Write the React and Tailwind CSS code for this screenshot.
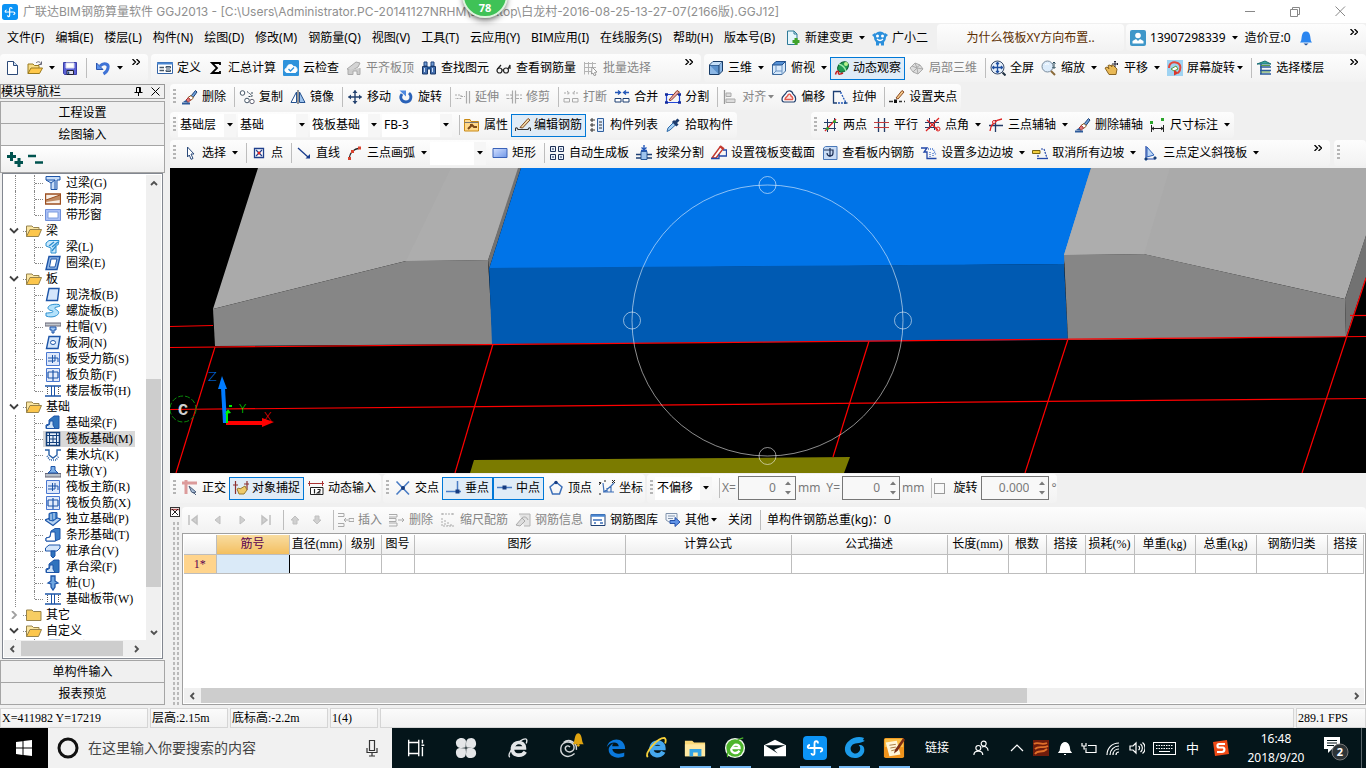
import { useState } from 'react'
import clsx from 'clsx'

const P = ({ d, c = '#1f4e8c', w = 1, f = 'none', dash }) => (
  <path d={d} stroke={c} strokeWidth={w} fill={f} strokeDasharray={dash} />
)

const broom = (
  <>
    <P d="M9 7L13.500 1.500L15 3L11 8.500Z" c="#1d3f73" f="#6fa3dd" />
    <P d="M6 8.500L9 6.500L11.500 9L8.500 11.500Z" c="#8a5a20" f="#fff" />
    <P d="M4 11L6.500 8.500L8.500 11L6 13.500Z" c="#a33" f="#d77" />
    <P d="M0 14.500H8" c="#2c5a9a" w="2" />
    <P d="M1 13L4 11L6 13.500Z" c="none" f="#2c5a9a" />
  </>
)

const icons = {
  newFile: <><P d="M3.500 1.500H9.500L13.500 5.500V14.500H3.500Z" c="#2d4a78" f="#fff" /><P d="M9.500 1.500V5.500H13.500" c="#2d4a78" f="#cfe0f5" /></>,
  open: <><P d="M1 13.500V4H6L7.500 5.500H12V8" c="#9a7a1e" f="#f7dd86" /><P d="M1 13.500L4 8H15.500L12.500 13.500Z" c="#9a7a1e" f="#ffc84a" /><P d="M9 3C11 1 13 1.500 14 4M14.500 1.500V4.500H11.500" c="#667" /></>,
  save: <><P d="M1.500 2.500H14.500V14.500H2.500L1.500 13.500Z" c="#3b3fa8" f="#5b62d6" /><P d="M4 3H12V8H4Z" c="#dde" f="#fff" /><P d="M5 10.500H11.500V14.500H5Z" c="#223" f="#dde" /><P d="M6.500 11.500V14" w="1.500" /></>,
  undo: <><P d="M5 6C9 2 14 4 13 8C12.500 11 11 12.500 8.500 14" c="#3f73d6" w="3" /><P d="M1.500 3V9.500H8Z" c="#2a55b0" f="#5b93ee" /></>,
  define: <><P d="M0.500 2.500H15.500V13.500H0.500Z" c="#3565a8" f="#fff" /><P d="M0 3.500H16" c="#4a86d0" w="2" /><P d="M2.500 7.500H7M2.500 10.500H7" c="#456" w="1.500" /><P d="M9 6.500H13.500V8H9ZM9 10H13.500V11.500H9Z" c="#456" f="#d8e6f7" /></>,
  sigma: <P d="M12 5V3H4L9 8L4 13H12V11" c="#000" w="1.800" />,
  cloud: <><rect width="16" height="16" rx="1" fill="#2f93dc" /><P d="M4 12.500C1 12 1.500 8 4 8C4 4 9 3.500 10.500 6.500C15 6 15 12.500 12 12.500Z" c="#fff" f="#fff" /><P d="M5.500 9L7.500 11L11 7.500" c="#2f93dc" w="1.400" /></>,
  slab: <><P d="M1 9L10 2L14 3L12 7L5 11Z" c="#a8a8a8" f="#d4d4d4" /><P d="M2 10V14.500H7V11H11V14.500H14V8" c="#aaa" f="#ccc" /></>,
  find: <><P d="M3 2H6V6H3ZM10 2H13V6H10Z" c="#23457f" f="#6f9ad2" /><P d="M1.500 6.500H6.500V14H1.500ZM9.500 6.500H14.500V14H9.500Z" c="#1a3868" f="#456fae" /><P d="M6 8H10" w="3" /><P d="M3.500 8V12M11.500 8V12" c="#cfe0f8" /></>,
  glasses: <><circle cx="3.500" cy="10.500" r="2.500" fill="none" stroke="#222" strokeWidth="1.200" /><circle cx="10" cy="10.500" r="2.500" fill="none" stroke="#222" strokeWidth="1.200" /><P d="M1.500 9L5 5M6 10H7.500M12 9L14 5V9" c="#222" w="1.200" /></>,
  batch: <><P d="M1.500 2V14.500M5.500 2V14.500M9.500 2V10M1 3.500H13M1 7.500H13M1 11.500H8" c="#b4b4b4" /><P d="M9 7L14 12L11.500 12.500L13 15L11 15.500L10 13L8.500 14Z" c="#999" f="#fff" /></>,
  cube: <><P d="M1.500 5L5 1.500H14.500V11L11 14.500H1.500Z" c="#173b66" f="#8db8e6" /><P d="M1.500 5H11V14.500M11 5L14.500 1.500" c="#173b66" f="#5b91cc" /><P d="M2 5L5 2H14L11 5Z" c="none" f="#c5dff8" /></>,
  topView: <><P d="M1.500 5L5 1.500H14.500V11L11 14.500H1.500Z" c="#3d6a9d" f="#d7e9fb" /><P d="M1.500 5L5 1.500H14.500L11 5Z" f="#5590d4" /><P d="M11 5V14.500M5 5V11H11M5 11L2 14" c="#6a93c2" /></>,
  orbit: <><ellipse cx="9" cy="7" rx="6" ry="4.500" transform="rotate(-40 9 7)" fill="#1f9a52" stroke="#0d5f30" /><P d="M5 4C8 5 11 8 12 11" c="#9be8a8" w="1.500" /><circle cx="12" cy="4" r="2" fill="#b8f28d" /><P d="M1.500 14.500C2.500 10 5 11 4.500 13C4 15 7 14 9 13" c="#c42020" w="1.500" /></>,
  partial: <><P d="M1 8L6 3L11 5L14 9L9 14L4 12Z" c="#aaa" f="#ddd" /><P d="M6 3L8 8L4 12M8 8L14 9M3 6L8 8L9 14M11 5L7 8" c="#aaa" /></>,
  full: <><circle cx="7.500" cy="7.500" r="6.500" fill="#e6f0fb" stroke="#3a4c69" /><P d="M7.500 2.500V12.500M2.500 7.500H12.500M6 4L7.500 2.500L9 4M6 11L7.500 12.500L9 11M4 6L2.500 7.500L4 9M11 6L12.500 7.500L11 9" c="#1f4fa0" w="1.300" /><P d="M12.500 12.500L15.500 15.500" c="#234" w="2" /></>,
  zoom: <><circle cx="6.500" cy="6.500" r="5.500" fill="#dcecfb" stroke="#7b8c9c" /><P d="M4 5C5 3.500 7 3.500 8 4.500" c="#fff" /><P d="M10 11L14 15" c="#8a6a3a" w="2" /><P d="M13 2V8M11.500 3.500L13 2L14.500 3.500M11.500 7L13 8.500L14.500 7" c="#245" /></>,
  pan: <><P d="M1 8L3 7L5 9L4 5.500L6 5L8 7L7.500 5L9.500 5.500L13 9L12 14.500H5Z" c="#8a6524" f="#e9b956" /><P d="M11 1V7M8 4H14M10 2L11 1L12 2M13 3L14 4L13 5" c="#223" /></>,
  screenRotate: <><rect width="16" height="16" fill="#9fd3f2" /><P d="M2 8C2 3 6 1.500 9 2.500C15 4 14 10 11 13" c="#e2483c" w="2" /><P d="M4 9L9 6L11 9L7 11Z" c="#5a9a3a" f="#fff" /><P d="M7 10L12 13L7 15.500Z" c="none" f="#d9372c" /></>,
  floor: <><P d="M1 4L9 1L15 4Z" c="#1b6d74" f="#38a89d" /><P d="M5 4V14M4 7H15M4 10.500H15M4 14H15" c="#2a5a9a" w="1.600" /><P d="M5 5.500H14M5 12H14" c="#5b9a46" /></>,
  broom,
  copy: <><circle cx="3.500" cy="4" r="2.300" fill="#fff" stroke="#456" /><circle cx="8" cy="11.500" r="2.300" fill="#fff" stroke="#456" /><circle cx="13" cy="12.500" r="2.200" fill="#fff" stroke="#667" /><P d="M8 2.500L13 6.500M13 3V7.500H9.500" c="#345" dash="2 1" /></>,
  mirror: <><P d="M6.500 3V13.500H1Z" c="#24518f" f="#fff" /><P d="M9.500 3V13.500H15Z" c="#24518f" f="#9ec3ec" /><P d="M8 1V15" c="#333" /></>,
  move: <><P d="M8 1.500V14.500M1.500 8H14.500" c="#24426f" w="1.400" /><P d="M5.500 4L8 1L10.500 4ZM5.500 12L8 15L10.500 12ZM4 5.500L1 8L4 10.500ZM12 5.500L15 8L12 10.500Z" c="none" f="#24426f" /></>,
  rotate: <><P d="M4 5C1 9 4 13 8 13C13 13 14.500 7 11 4" c="#2a62b8" w="2.800" /><P d="M1.500 1.500H8V7.500Z" c="none" f="#4f8ae0" /></>,
  extend: <><P d="M14.500 2V14.500M11.500 2V14.500" c="#aaa" w="1.200" /><P d="M0 6H6V9.500H0M6 7.500H10" c="#aaa" dash="2 1" /></>,
  trim: <><P d="M6.500 1.500V14.500M9.500 1.500V14.500" c="#aaa" w="1.200" /><P d="M0 6H6V9.500H0M10 6H16M10 9.500H16" c="#aaa" dash="3 1" /></>,
  split: <><P d="M1 9.500H6.500V13H1ZM9.500 9.500H15V13H9.500Z" c="#aaa" /><P d="M1 4H6M4 2L6.500 4L4 6M15 4H10M12 2L9.500 4L12 6" c="#aaa" dash="2 1" /></>,
  merge: <><P d="M1 9.500H7V13H1ZM9 9.500H15V13H9Z" c="#1d3f73" f="#fff" /><P d="M1 3.500H6M4 1.500L6.500 3.500L4 5.500M15 3.500H10M12 1.500L9.500 3.500L12 5.500" c="#2458b8" w="1.300" /></>,
  divide: <><P d="M1.500 5.500H14.500V13.500H1.500Z" c="#2247d8" w="1.200" /><P d="M0 5.500H3M13 5.500H16M0 13.500H3M13 13.500H16" c="#122a9c" w="2.500" /><P d="M4 11L12 1.500L14.500 3L6 11.500Z" c="#8a3b22" f="#eaa" /></>,
  align: <><P d="M2.500 1V15" c="#999" w="1.300" /><P d="M4 4H9V7.500H4ZM4 10H13V13.500H4Z" c="#aaa" f="#ddd" /></>,
  offset: <><P d="M1 10C1 7 4 6 5 4C6 1 11 1 12 5C15 7 15.500 12 13 13H3C1.500 13 1 12 1 10Z" c="#24426f" w="1.200" f="#fff" /><P d="M4 10.500C4 8 6.500 8 7 6C8 4.500 9.500 5 10 7C12 8 12 10 11.500 10.500Z" c="#e35b50" w="1.400" f="#fbe3e0" /></>,
  stretch: <><P d="M9 2.500H1.500V14H5" c="#1d3f73" w="1.300" /><P d="M9 3V6M10 6L14 14H6" c="#2458b8" dash="2 1" w="1.300" /><P d="M12 14H15.500" w="1.500" /></>,
  grip: <><P d="M0 12.500H4" c="#333" w="1.500" /><P d="M5 10.500H8V14H5Z" c="none" f="#111" /><P d="M10 12.500H16" c="#333" w="1.500" dash="3 2" /><P d="M7 9L13 1.500L15 3L9 10Z" c="#8a4a22" f="#f5c98a" /></>,
  props: <><P d="M0.500 2.500H6L7 4.500H14.500V14H0.500Z" c="#c98a17" f="#ffd98c" /><P d="M0.500 5.500H14.500" c="#777" /><P d="M4 12L8 8L10 10H13M8 8L6 8" c="#7d4a18" w="2" /></>,
  editBar: <><P d="M0.500 14C0 10 2 10 3 12.500H13C14 10 16 10 15.500 14" c="#333" w="1.200" /><P d="M5 10.500L13 1.500L15 3L7.500 11Z" c="#7f4a22" f="#f0d9a8" /></>,
  list: <><P d="M1 2H3V4H1ZM1 7H3V9H1ZM1 12H3V14H1Z" c="#333" /><P d="M7.500 1.500H13.500V14.500H7.500Z" c="#2f5f9f" f="#dbe9fa" /><P d="M9 5H12M9 8H12M9 11H12" c="#333" /><P d="M4 3H6M4 8H6M4 13H6" c="#333" dash="1 1" /></>,
  picker: <><P d="M2 14.500L3 11L9 5L11 7.500L5 13Z" c="#2e6aa8" f="#a9d2f5" /><P d="M8 4L12.500 8.500M10 6L13.500 2.500" c="#1b3b6d" w="3" /></>,
  twoPoint: <><P d="M4.500 2V15M11.500 1V14M1 5.500H15M0 11.500H13" c="#223a66" /><P d="M2 14L13 2" c="#d22" w="1.300" /><circle cx="11.500" cy="4.500" r="1.500" fill="#2aa52a" /><circle cx="4.500" cy="11.500" r="1.500" fill="#2aa52a" /></>,
  parallel: <><P d="M4.500 1V15M10.500 1V15" c="#223a66" w="1.300" /><P d="M0 5.500H15M0 10.500H15" c="#c43b3b" /></>,
  angle: <><P d="M4.500 1V12M9.500 3V13M0 5.500H14M0 10.500H9" c="#223a66" /><P d="M1 14L14 1M2 3L13 13" c="#d22" w="1.300" /><circle cx="13" cy="12" r="2" fill="none" stroke="#d22" /></>,
  arcAxis: <><P d="M7.500 3V15M1 8.500H15" c="#223a66" w="1.300" /><P d="M2 14C3 6 7 3 14 2" c="#d22" w="1.300" /><circle cx="6" cy="5" r="1.500" fill="#fff" stroke="#d22" /></>,
  dimension: <><P d="M1.500 8V15M13.500 8V15M2 11.500H14M4 10L2 11.500L4 13M11 10L13 11.500L11 13" c="#222" /><P d="M0 4H3V7H0ZM11 1H14V4H11Z" c="none" f="#2aa52a" /></>,
  cursor: <P d="M5.500 2L12 9H9L11 13.500L9 14.300L7.300 10L5.500 12Z" c="#2b4a7a" f="#fff" />,
  point: <><P d="M3.500 3.500H12.500V12.500H3.500Z" c="#1f3f8c" w="1.300" f="#fff" /><P d="M5 5L11 11M11 5L5 11" c="#1f3f8c" w="1.200" /><circle cx="8" cy="8" r="1.500" fill="#d22" /></>,
  line: <><P d="M2 3L12 12" c="#173b8c" w="1.300" /><P d="M9.500 13.500H14V9Z" c="none" f="#173b8c" /></>,
  arc: <><P d="M2 14C3 7 6 4 13 3" c="#222" w="1.300" /><P d="M1 12H4V15H1ZM4 5H7V8H4ZM11 1.500H14V4.500H11Z" c="none" f="#d9432f" /></>,
  rect: <><defs><linearGradient id="rectFill" x2="1" y2="1"><stop stopColor="#d4e1ff" /><stop offset="1" stopColor="#6f97e8" /></linearGradient></defs><P d="M1 3.500H15V12.500H1Z" c="#3a62b8" f="url(#rectFill)" /></>,
  autoSlab: <P d="M1.500 1.500H6.500V6.500H1.500ZM9.500 1.500H14.500V6.500H9.500ZM1.500 9.500H6.500V14.500H1.500ZM9.500 9.500H14.500V14.500H9.500ZM4 3V5M12 3V5M4 11V13M12 11V13" c="#1d3056" f="#eaf1fb" />,
  beamSplit: <><P d="M5 6.500H11V14.500H5Z" c="#2c5a9a" f="#9ec3ec" /><P d="M0 9.500H5M0 13H5M11 9.500H16M11 13H16" c="#1d3f73" w="1.300" /><P d="M8 0V4M5.500 2.500L8 4.500L10.500 2.500M5 5.500H11" c="#2458b8" w="1.400" /></>,
  section: <><P d="M1 13L9 2L12 4L5 13Z" c="#c4382f" f="#fff" w="1.400" /><P d="M0 13.500H8V9M12 5H15.500V11H8" c="#2247a8" w="1.300" /><P d="M9 1L13 4" c="#c4382f" w="2" /></>,
  viewBar: <><P d="M3.500 1.500H15V14.500H1.500V3Z" c="#4a78b8" f="#c9dcf5" /><P d="M2 5H11V8C11 12 5 12 5 8M8 3V12" c="#1d3056" w="1.200" /></>,
  slope: <><P d="M0 3H6L3 7H6V13.500H15.500" c="#2247a8" w="1.300" /><P d="M7 4H12L15 10M9 7V12M12 8V12" c="#4a78d0" dash="1 1" w="1.400" /></>,
  cancelSlope: <><P d="M0.500 5.500H8V8.500H0.500Z" c="#7a6510" f="#f2cf3f" /><P d="M9 4H12L15 13M6 10V13" c="#2247a8" dash="2 1" w="1.200" /><P d="M5 13.500H16" c="#2247a8" w="1.300" /></>,
  threeSlope: <><P d="M4 2V12L11 10Z" c="#2c62b8" f="#bcd6f7" /><P d="M3 1V14M3 14H12" c="#2247a8" w="1.200" /><P d="M2 13H4V15H2ZM11 12H13V14H11Z" f="#113" /></>,
  ortho: <><P d="M0 3H15M4 0V14" c="#dc9b9b" w="3" /><P d="M7 6L14 12L11.500 13L9.500 12Z" c="#4c5f7c" f="#a9bdd6" /><P d="M11 12L14 15" c="#4c5f7c" /></>,
  snap: <><P d="M2.500 1V14M0 5H5M14 1V10M11 4H16" c="#8c2f2f" w="1.200" /><P d="M4 9L6 8L7 9L12 6L14 10L11 14H6Z" c="#9a7a2e" f="#f0cb6a" /></>,
  dynInput: <><P d="M0 3.500H16M1.500 1V6M14.500 1V6" c="#a33" /><P d="M2.500 7.500H15V14.500H2.500Z" c="#222" f="#fff" /><P d="M6.500 9V13.500M9.500 9.500H12V11L9.500 13H12.500" c="#222" w="1.200" /></>,
  cross: <><P d="M1.500 1.500L14 14.500M14 1.500L1.500 14.500" c="#4a7cc4" w="1.600" /><circle cx="8" cy="8" r="2" fill="#153b80" /></>,
  perp: <><P d="M11.500 1V12M0 11.500H15" c="#4a7cc4" w="1.500" /><P d="M9.500 9.500H13.500V13.500H9.500Z" c="none" f="#153b80" /></>,
  mid: <><P d="M0 7.500H15" c="#4a7cc4" w="1.500" /><P d="M5.500 5.500H9.500V9.500H5.500Z" c="none" f="#153b80" /></>,
  vertex: <><P d="M8 2L14 7L11.500 14H4.500L2 7Z" c="#3c6fb8" w="1.500" /><circle cx="8" cy="2.500" r="1.700" fill="#153b80" /></>,
  coord: <><P d="M4 3L5 12M4 12H15M5 12L12 6L15 3M8 8V12M12 6V12" c="#3c6fb8" w="1.200" /><P d="M0 2L2 4M2 2L0 5M13 0L16 3M16 0L13 3M6 0V2M0 14H2" c="#222" /></>,
  first: <P d="M3 3V13M11 4V12L6 8Z" c="#c0c0c0" w="1.500" f="#d0d0d0" />,
  prev: <P d="M10 4V12L5 8Z" c="#c0c0c0" f="#d0d0d0" />,
  next: <P d="M6 4V12L11 8Z" c="#c0c0c0" f="#d0d0d0" />,
  last: <P d="M12 3V13M4 4V12L9 8Z" c="#c0c0c0" w="1.500" f="#d0d0d0" />,
  up: <P d="M8 4L12 8H10V12H6V8H4Z" c="#c0c0c0" f="#d0d0d0" />,
  down: <P d="M8 12L12 8H10V4H6V8H4Z" c="#c0c0c0" f="#d0d0d0" />,
  insertRow: <P d="M0 1.500H6V4.500H0M0 11.500H6V14.500H0M6 8H10M8 6L6 8L8 10M11 6.500H16V9.500H11Z" c="#aaa" />,
  removeRow: <P d="M0 2.500H8V5H0M0 11H8V14H0M0 6.500H7V9.500H0M9 8H15M13 6L15 8L13 10" c="#aaa" />,
  scaleBar: <P d="M2 2H13M2 1V3M13 1V3M2 6V14H14M5 8V14M8 10V14M11 12V14" c="#aaa" dash="2 1" />,
  barInfo: <><P d="M4 2H15V14H9" c="#b4b4b4" f="#e4e4e4" /><P d="M1 13L7 6L10 9L5 14ZM7 6C9 4 12 5 13 8" c="#aaa" f="#ddd" /></>,
  library: <><P d="M1 2.500H15V13.500H1Z" c="#1d3f73" f="#fff" /><P d="M1 3.500H15" c="#4a86d0" w="2.500" /><P d="M3 8H12M4 11H6M10 11H13" c="#3c6fb8" w="1.500" /></>,
  other: <><P d="M1 1.500H12V10H4L1 8Z" c="#8294ad" f="#f0f5fb" /><P d="M3 4H10M3 6.500H8" c="#8294ad" /><P d="M5 8.500H10V5.500L15 10L10 14.500V11.500H5Z" c="#2450a8" f="#5f92e6" /></>,
  change: <><P d="M2.500 1H9L12 4V14.500H2.500Z" c="#2d7a98" f="#e6f6fc" /><P d="M9 1V4H12" c="#2d7a98" /><P d="M11 8V15M7.500 11.500H14.500" c="#3fa32a" w="3" /></>,
  mascot: <><circle cx="8" cy="7.500" r="6" fill="#2a8fdc" /><P d="M0 5L3 3V8ZM16 5L13 3V8ZM4 12H7V15.500H4ZM9 12H12V15.500H9Z" c="none" f="#2a8fdc" /><circle cx="5.500" cy="6" r="1.500" fill="#fff" /><circle cx="10.500" cy="6" r="1.500" fill="#fff" /><P d="M5 9C7 11 9 11 11 9" c="#fff" w="1.200" /></>,
  user: <><rect width="16" height="16" rx="2" fill="#3f97c9" /><circle cx="8" cy="5.500" r="2.800" fill="#fff" /><P d="M2.500 13.500V11L6 9L8 11L10 9L13.500 11V13.500Z" c="none" f="#fff" /></>,
  bell: <><P d="M3 11C4 8 3 1.500 8 1.500C13 1.500 12 8 13 11L14 12.500H2Z" c="none" f="#2b86f0" /><P d="M5.500 13.500H10.500L8 15.500Z" c="none" f="#1c4f9a" /></>,
}

const blue = '#1d55a8'
const treeIcons = {
  lintel: <><P d="M1 1.500H15V5H12V14.500H6V8L1 5Z" c={blue} f="#c9def8" /><P d="M1 5H10L6 8M10 5V14" c={blue} /></>,
  stripHole: <><P d="M0.500 3H15.500V13H0.500Z" c="#9c4f20" f="#f8efe6" w="1.400" /><P d="M1 9L15 4V9L1 11Z" c="none" f="#c08a62" /><P d="M1 9L15 4" c="#9c4f20" /></>,
  stripWindow: <><P d="M0.500 2.500H15.500V13.500H0.500Z" c="#6f8fd8" f="#a9bff5" /><P d="M3 5H13V11H3Z" c="#7f9fe0" f="#fff" /></>,
  beam: <><P d="M1 4L4 1.500H14L13 6H11V14H6V9L1 7Z" c="#2a8fd0" f="#cdeafc" /><P d="M4 7L9 3M7 8L13 3M7 12L11 7" c="#2a8fd0" w="1.400" /></>,
  ring: <><P d="M4 1.500H15L12 14.500H1Z" c={blue} f="#8fb6e6" w="1.400" /><P d="M6 4H12L10 12H4.500Z" c={blue} f="#fff" /></>,
  slab: <P d="M4 1.500H14L12.500 13.500H1.500Z" c={blue} f="#d4e6fb" w="1.400" />,
  spiral: <P d="M14 1.500C3 0 0 6 6 7.500C10 8 8 10 1 10V13C9 16 16 11 13 8C11 6 9 6 10 4.500C11 4 13 4 15 3Z" c="#2a8fd0" f="#b4e2fb" />,
  cap: <><P d="M0 4H16V7H0Z" c="#667" f="#c3c8ce" /><P d="M5 8H11V11H9V14H7V11H5Z" c={blue} f="#9cc3f0" /></>,
  hole: <><P d="M4 1.500H15L13 13.500H1.500Z" c={blue} f="#d4e6fb" w="1.400" /><ellipse cx="8" cy="7.500" rx="2.500" ry="2" fill="#fff" stroke={blue} /></>,
  rebar: <><P d="M1.500 1.500H14.500V14.500H1.500Z" c="#4a78d0" f="#dfe9fb" /><P d="M3 7H13V11M7.500 4V12M3 10H10V4" c={blue} /></>,
  negRebar: <><P d="M1.500 1.500H14.500V14.500H1.500Z" c="#4a78d0" f="#e4ecfb" /><P d="M3 5H13M3 11H13M8 3V14M3 5V11M13 5V11" c={blue} w="1.200" /></>,
  band: <><P d="M0 3H16M0 13H16" c={blue} w="1.500" /><P d="M6.500 3V13M9.500 3V13" c={blue} /><P d="M2.500 4V12M13.500 4V12" c="#555" dash="1 1" /></>,
  footBeam: <><P d="M1 13.500V10L4 9V5L9 1H14V13.500Z" c={blue} f="#2f73bd" /><P d="M1.500 13.500V11L4.500 9.500L5 6H8V10L10 13.500Z" c={blue} f="#cfe3f8" /></>,
  raft: <><P d="M1.500 1.500H14.500V14.500H1.500Z" c="#123f7a" w="1.500" f="#e4eef9" /><P d="M4.500 1.500V14.500M11.500 1.500V14.500M1.500 4.500H14.500M1.500 11.500H14.500M8 4.500V11.500M4.500 8H11.500" c="#123f7a" /></>,
  pit: <><P d="M0 3H4V8L8 11L12 8V3H16" c="#2a62a8" w="1.400" /><P d="M2 9L5 13H11L14 9" c="#2a62a8" dash="1 1" w="1.600" /></>,
  pier: <><P d="M0 10.500H16V14H0Z" c="#667" f="#b9c0c8" /><P d="M3 10L6 7V3.500H10V7L13 10Z" c={blue} f="#7fb0e8" /></>,
  iso: <><P d="M0 9L8 6L16 8L8 14.500Z" c={blue} f="#b4d2f2" w="1.200" /><P d="M4 9V2.500L7 1.500H12V7L8 10Z" c={blue} f="#3d7fc8" /><P d="M6 3V9M9 2V8" c="#dcebfb" /></>,
  stripFoot: <><P d="M1 14V11L5 10L6 4L10 1.500H15V12L10 14Z" c={blue} f="#3d7fc8" /><P d="M1 14V11L5 10L6 5H10L10.500 14Z" c={blue} f="#fff" /></>,
  pileCap: <><P d="M0.500 5L4 2H15V5L12 8H0.500Z" c={blue} f="#d4e6fb" /><P d="M6 8H10V13L8 15L6 13Z" c={blue} f="#2f73bd" /></>,
  pile: <P d="M6 1H10V6L13 8L10 9V12L8 15L6 12V9L3 8L6 6Z" c={blue} f="#6fa6e0" w="1.300" />,
}

function Icon({ name, set = icons, className }) {
  return (
    <svg viewBox="0 0 16 16" className={clsx('h-4 w-4 shrink-0', className)} aria-hidden="true">
      {set[name]}
    </svg>
  )
}

function Caret({ className }) {
  return (
    <svg viewBox="0 0 6 4" className={clsx('h-1 w-1.5 shrink-0', className)} aria-hidden="true">
      <path d="M0 0H6L3 3.500Z" fill="currentColor" />
    </svg>
  )
}

function Tool({ icon, label, active, disabled, arrow, tight }) {
  return (
    <>
      <button
        type="button"
        disabled={disabled}
        className={clsx(
          'flex h-[23px] shrink-0 items-center whitespace-nowrap',
          active ? 'gap-[3px] border border-[#0078d7] bg-[#e0ecf7] px-[3px]' : 'gap-1 pl-1 pr-[3px]',
          disabled && 'text-[#868686]',
        )}
      >
        {icon && <Icon name={icon} />}
        {label}
        {tight && <Caret className="-ml-0.5" />}
      </button>
      {arrow && (
        <button type="button" aria-label={`${label} 更多`} className="flex h-[23px] w-3 shrink-0 items-center justify-center">
          <Caret />
        </button>
      )}
    </>
  )
}

const Sep = () => <span className="ml-[5px] h-5 w-px shrink-0 bg-[#bdbdbd]" />

const Grip = () => (
  <span className="ml-[3px] mr-0.5 h-4 w-[3px] shrink-0 bg-[repeating-linear-gradient(#b5b5b5_0_2px,transparent_2px_4px)]" />
)

function Bar({ className, children }) {
  return (
    <div className={clsx('flex items-center rounded-sm bg-linear-to-b from-[#fdfdfd] to-[#f2f2f2]', className)}>
      {children}
    </div>
  )
}

function Tools({ items }) {
  return items.map((item, i) => (item === '|' ? <Sep key={i} /> : <Tool key={i} {...item} />))
}

const More = () => (
  <button type="button" aria-label="更多" className="mr-2 ml-auto flex h-4 shrink-0 items-center self-start">
    <svg viewBox="0 0 8 6" className="h-1.5 w-2">
      <path d="M0.500 0L3.500 3L0.500 6M4.500 0L7.500 3L4.500 6" stroke="#000" strokeWidth="1.300" fill="none" />
    </svg>
  </button>
)

function Combo({ label, value, className }) {
  return (
    <span className={clsx('mr-0.5 flex h-[23px] shrink-0 items-center bg-white', className)}>
      <select aria-label={label} className="min-w-0 flex-1 appearance-none bg-transparent pl-0.5 outline-none">
        <option>{value}</option>
      </select>
      <span className="pointer-events-none flex h-full w-3 items-center justify-center bg-[#f6f6f6]">
        <Caret />
      </span>
    </span>
  )
}

const menus = [
  '文件(F)', '编辑(E)', '楼层(L)', '构件(N)', '绘图(D)', '修改(M)', '钢筋量(Q)', '视图(V)',
  '工具(T)', '云应用(Y)', 'BIM应用(I)', '在线服务(S)', '帮助(H)', '版本号(B)',
]

const mainTools = [
  { icon: 'define', label: '定义' },
  { icon: 'sigma', label: '汇总计算' },
  { icon: 'cloud', label: '云检查' },
  { icon: 'slab', label: '平齐板顶', disabled: true },
  { icon: 'find', label: '查找图元' },
  { icon: 'glasses', label: '查看钢筋量' },
  { icon: 'batch', label: '批量选择', disabled: true },
]

const viewTools = [
  { icon: 'cube', label: '三维', arrow: true },
  { icon: 'topView', label: '俯视', arrow: true },
  { icon: 'orbit', label: '动态观察', active: true },
  { icon: 'partial', label: '局部三维', disabled: true },
  '|',
  { icon: 'full', label: '全屏' },
  { icon: 'zoom', label: '缩放', arrow: true },
  { icon: 'pan', label: '平移', arrow: true },
  { icon: 'screenRotate', label: '屏幕旋转', tight: true },
  '|',
  { icon: 'floor', label: '选择楼层' },
]

const editTools = [
  { icon: 'broom', label: '删除' },
  '|',
  { icon: 'copy', label: '复制' },
  { icon: 'mirror', label: '镜像' },
  '|',
  { icon: 'move', label: '移动' },
  { icon: 'rotate', label: '旋转' },
  '|',
  { icon: 'extend', label: '延伸', disabled: true },
  { icon: 'trim', label: '修剪', disabled: true },
  '|',
  { icon: 'split', label: '打断', disabled: true },
  { icon: 'merge', label: '合并' },
  { icon: 'divide', label: '分割' },
  '|',
  { icon: 'align', label: '对齐', disabled: true, tight: true },
  { icon: 'offset', label: '偏移' },
  { icon: 'stretch', label: '拉伸' },
  '|',
  { icon: 'grip', label: '设置夹点' },
]

const elementTools = [
  '|',
  { icon: 'props', label: '属性' },
  { icon: 'editBar', label: '编辑钢筋', active: true },
  { icon: 'list', label: '构件列表' },
  { icon: 'picker', label: '拾取构件' },
]

const axisTools = [
  { icon: 'twoPoint', label: '两点' },
  { icon: 'parallel', label: '平行' },
  { icon: 'angle', label: '点角', arrow: true },
  { icon: 'arcAxis', label: '三点辅轴', arrow: true },
  { icon: 'broom', label: '删除辅轴' },
  { icon: 'dimension', label: '尺寸标注', arrow: true },
]

const drawTools = [
  { icon: 'cursor', label: '选择', arrow: true },
  '|',
  { icon: 'point', label: '点' },
  '|',
  { icon: 'line', label: '直线' },
  { icon: 'arc', label: '三点画弧', arrow: true },
]

const slabTools = [
  { icon: 'rect', label: '矩形' },
  '|',
  { icon: 'autoSlab', label: '自动生成板' },
  { icon: 'beamSplit', label: '按梁分割' },
  { icon: 'section', label: '设置筏板变截面' },
  { icon: 'viewBar', label: '查看板内钢筋' },
  { icon: 'slope', label: '设置多边边坡', arrow: true },
  { icon: 'cancelSlope', label: '取消所有边坡', arrow: true },
  { icon: 'threeSlope', label: '三点定义斜筏板', arrow: true },
]

const snapTools = [
  { icon: 'cross', label: '交点' },
  { icon: 'perp', label: '垂点', active: true },
  { icon: 'mid', label: '中点', active: true },
  { icon: 'vertex', label: '顶点' },
  { icon: 'coord', label: '坐标' },
]

const barTools = [
  '|',
  { icon: 'insertRow', label: '插入', disabled: true },
  { icon: 'removeRow', label: '删除', disabled: true },
  { icon: 'scaleBar', label: '缩尺配筋', disabled: true },
  { icon: 'barInfo', label: '钢筋信息', disabled: true },
  { icon: 'library', label: '钢筋图库' },
  { icon: 'other', label: '其他', tight: true },
]

const tree = [
  { icon: 'lintel', label: '过梁(G)' },
  { icon: 'stripHole', label: '带形洞' },
  { icon: 'stripWindow', label: '带形窗', last: true },
  { folder: 'open', label: '梁' },
  { icon: 'beam', label: '梁(L)' },
  { icon: 'ring', label: '圈梁(E)', last: true },
  { folder: 'open', label: '板' },
  { icon: 'slab', label: '现浇板(B)' },
  { icon: 'spiral', label: '螺旋板(B)' },
  { icon: 'cap', label: '柱帽(V)' },
  { icon: 'hole', label: '板洞(N)' },
  { icon: 'rebar', label: '板受力筋(S)' },
  { icon: 'negRebar', label: '板负筋(F)' },
  { icon: 'band', label: '楼层板带(H)', last: true },
  { folder: 'open', label: '基础' },
  { icon: 'footBeam', label: '基础梁(F)' },
  { icon: 'raft', label: '筏板基础(M)' },
  { icon: 'pit', label: '集水坑(K)' },
  { icon: 'pier', label: '柱墩(Y)' },
  { icon: 'rebar', label: '筏板主筋(R)' },
  { icon: 'negRebar', label: '筏板负筋(X)' },
  { icon: 'iso', label: '独立基础(P)' },
  { icon: 'stripFoot', label: '条形基础(T)' },
  { icon: 'pileCap', label: '桩承台(V)' },
  { icon: 'footBeam', label: '承台梁(F)' },
  { icon: 'pile', label: '桩(U)' },
  { icon: 'band', label: '基础板带(W)', last: true },
  { folder: 'closed', label: '其它' },
  { folder: 'open', label: '自定义' },
  { icon: 'slab', label: '自定义点' },
]

const columns = [
  ['直径(mm)', 'w-14'],
  ['级别', 'w-9'],
  ['图号', 'w-[33px]'],
  ['图形', 'w-[211px]'],
  ['计算公式', 'w-[166px]'],
  ['公式描述', 'w-[156px]'],
  ['长度(mm)', 'w-[61px]'],
  ['根数', 'w-[38px]'],
  ['搭接', 'w-[39px]'],
  ['损耗(%)', 'w-[49px]'],
  ['单重(kg)', 'w-[61px]'],
  ['总重(kg)', 'w-[61px]'],
  ['钢筋归类', 'w-[71px]'],
  ['搭接', 'w-auto'],
]

function AppLogo({ className }) {
  return (
    <svg viewBox="0 0 24 24" className={className} aria-hidden="true">
      <rect width="24" height="24" rx="4" fill="#0c93f5" />
      <path d="M15 7.500C15 4.500 11.500 4.500 11.500 7.500V17C11.500 19.500 8.500 19.500 8.500 17M7 12H17C20 12 20 16 17 15.500M7 9C4 9.500 4 13 7 12" stroke="#fff" strokeWidth="1.800" fill="none" />
    </svg>
  )
}

function TitleBar() {
  return (
    <header className="relative flex h-[23px] shrink-0 items-center bg-white text-[#8f8f8f]">
      <AppLogo className="ml-0.5 h-4 w-4" />
      <h1 className="ml-[5px] font-['Inter','Noto_Sans_CJK_SC',sans-serif] text-[12px] whitespace-nowrap">
        广联达BIM钢筋算量软件 GGJ2013 - [C:\Users\Administrator.PC-20141127NRHM\Desktop\白龙村-2016-08-25-13-27-07(2166版).GGJ12]
      </h1>
      <div className="mr-5 ml-auto flex gap-[34px]">
        {['M0 5.500H10', 'M0.500 3.500H7.500V10.500H0.500ZM2.500 3V1.500H9.500V8.500H8', 'M0.500 0.500L10 10M10 0.500L0.500 10'].map((d, i) => (
          <button key={d} type="button" aria-label={['最小化', '还原', '关闭'][i]}>
            <svg viewBox="0 0 11 11" className="h-[11px] w-[11px]">
              <path d={d} stroke="#888" fill="none" />
            </svg>
          </button>
        ))}
      </div>
      <div className="absolute -top-[27px] left-[462px] z-10 flex h-[45px] w-[46px] items-end justify-center rounded-full border-2 border-[#dff3df] bg-[#3fc257] pb-0.5 text-[11px] leading-3 font-bold text-white shadow-md shadow-black/40">
        78
      </div>
    </header>
  )
}

function MenuRow() {
  return (
    <div className="flex h-[29px] shrink-0 items-center">
      <nav className="flex items-center gap-[11px] pl-[7px] whitespace-nowrap">
        {menus.map((m) => (
          <button key={m} type="button">{m}</button>
        ))}
      </nav>
      <div className="flex items-center pl-1.5">
        <Tool icon="change" label="新建变更" arrow />
        <Tool icon="mascot" label="广小二" />
      </div>
      <Bar className="ml-1.5 h-[27px] w-[187px] shrink-0 justify-center text-[#5c2e00]">为什么筏板XY方向布置..</Bar>
      <Bar className="ml-0.5 h-[27px] min-w-0 flex-1">
        <Tool icon="user" label="13907298339" arrow />
        <Tool label="造价豆:0" />
        <Icon name="bell" className="ml-1" />
        <More />
      </Bar>
    </div>
  )
}

function ScrollArrow({ d, label }) {
  return (
    <button type="button" aria-label={label} className="flex h-[15px] w-[15px] shrink-0 items-center justify-center">
      <svg viewBox="0 0 8 8" className="h-2 w-2">
        <path d={d} stroke="#505050" strokeWidth="1.800" fill="none" />
      </svg>
    </button>
  )
}

function Folder({ open }) {
  return (
    <svg viewBox="0 0 16 16" className="mr-1 h-4 w-4 shrink-0" aria-hidden="true">
      {open ? (
        <>
          <path d="M0.500 13.500V3H6L7.500 4.500H13V7" fill="#fbe6a2" stroke="#97834c" />
          <path d="M0.500 13.500L4 6.500H15.500L12.500 13.500Z" fill="#fcc64c" stroke="#97834c" />
        </>
      ) : (
        <path d="M0.500 13.500V3H6L7.500 4.500H15V13.500Z" fill="#f7cd63" stroke="#97834c" />
      )}
    </svg>
  )
}

function TreeRow({ item, selected, onSelect }) {
  if (item.folder) {
    return (
      <li className="flex h-4 shrink-0 items-center pl-[5px] whitespace-nowrap">
        <svg viewBox="0 0 10 8" className="mr-1 h-2 w-2.5">
          <path d={item.folder === 'open' ? 'M1 1.500L5 5.500L9 1.500' : 'M3 0L7 4L3 8'} stroke={item.folder === 'open' ? '#404040' : '#a0a0a0'} strokeWidth="1.800" fill="none" />
        </svg>
        <span className="w-[3px] border-t border-dotted border-[#888]" />
        <Folder open={item.folder === 'open'} />
        {item.label}
      </li>
    )
  }
  return (
    <li className="flex h-4 shrink-0 items-center whitespace-nowrap">
      <span className="ml-[11px] h-full w-[19px] border-l border-dotted border-[#888]" />
      <span className={clsx('w-px self-start border-l border-dotted border-[#888]', item.last ? 'h-2' : 'h-4')} />
      <span className="w-2 border-t border-dotted border-[#888]" />
      <button type="button" onClick={onSelect} className={clsx('flex h-4 items-center gap-[5px] px-0.5', selected && 'bg-[#d9d9d9]')}>
        <Icon name={item.icon} set={treeIcons} />
        {item.label}
      </button>
    </li>
  )
}

function Sidebar() {
  const [selected, setSelected] = useState('筏板基础(M)')
  const tab = 'w-full shrink-0 border border-[#a5a5a5]'

  return (
    <aside className="flex w-[165px] shrink-0 flex-col font-['Liberation_Serif','Noto_Sans_CJK_SC',serif]">
      <div className="mb-0.5 flex h-[15px] shrink-0 items-center border border-[#999] leading-3">
        <span className="flex-1">模块导航栏</span>
        <button type="button" aria-label="固定" className="mr-2">
          <svg viewBox="0 0 9 9" className="h-[9px] w-[9px]"><path d="M2.500 0.500H6.500V5M2.500 0.500V5M5.500 0V5M0.500 5.500H8.500M4.500 5V9" stroke="#000" fill="none" /></svg>
        </button>
        <button type="button" aria-label="关闭" className="mr-1">
          <svg viewBox="0 0 9 9" className="h-[9px] w-[9px]"><path d="M0.500 0.500L8.500 8.500M8.500 0.500L0.500 8.500" stroke="#000" fill="none" /></svg>
        </button>
      </div>
      <button type="button" className={clsx(tab, 'h-[23px]')}>工程设置</button>
      <button type="button" className={clsx(tab, '-mt-px h-[23px]')}>绘图输入</button>
      <div className="-mt-px flex h-7 shrink-0 items-center gap-1 border border-[#a5a5a5] bg-linear-to-b from-white to-[#f0f0f0] pl-1.5">
        <button type="button" aria-label="全部展开">
          <svg viewBox="0 0 16 16" className="h-4 w-4"><path d="M4.500 1V10M0 5.500H9M12 7V16M7.500 11.500H16" stroke="#00534f" strokeWidth="3" /></svg>
        </button>
        <button type="button" aria-label="全部折叠">
          <svg viewBox="0 0 16 16" className="h-4 w-4"><path d="M1 5H9M8 11.500H16" stroke="#00534f" strokeWidth="2.500" /></svg>
        </button>
      </div>
      <div className="mx-0.5 flex min-h-0 flex-1 flex-col border border-[#828790] bg-white p-px">
        <div className="flex min-h-0 flex-1">
          <ul className="min-w-0 flex-1 overflow-hidden">
            {tree.map((item) => (
              <TreeRow key={item.label} item={item} selected={selected === item.label} onSelect={() => setSelected(item.label)} />
            ))}
          </ul>
          <div className="flex w-[15px] flex-col bg-[#f0f0f0]">
            <ScrollArrow label="向上" d="M1 6L4 3L7 6" />
            <div className="mt-auto h-[208px] bg-[#cdcdcd]" />
            <div className="h-[38px]" />
            <ScrollArrow label="向下" d="M1 2L4 5L7 2" />
          </div>
        </div>
        <div className="flex h-[17px] shrink-0 items-center bg-[#f0f0f0]">
          <ScrollArrow label="向左" d="M6 1L3 4L6 7" />
          <div className="ml-0.5 h-[15px] w-[102px] bg-[#cdcdcd]" />
          <span className="w-1.5" />
          <ScrollArrow label="向右" d="M2 1L5 4L2 7" />
        </div>
      </div>
      <button type="button" className={clsx(tab, 'mt-px h-[23px]')}>单构件输入</button>
      <button type="button" className={clsx(tab, '-mt-px mb-0.5 h-[23px]')}>报表预览</button>
    </aside>
  )
}

const red = '#ff0000'

function Viewport() {
  return (
    <svg viewBox="170 168 1196 305" preserveAspectRatio="xMidYMid slice" className="block h-[305px] w-full shrink-0 bg-black">
      <polygon points="258,168 519,168 488,260 406,261 213,309" fill="#aaaaaa" />
      <polygon points="451,168 519,168 488,260 406,261" fill="#adadad" />
      <polygon points="213,309 406,261 488,260 493,344 215,346" fill="#868686" />
      <polygon points="518,168 521,168 489,269 488,260" fill="#717171" />
      <polygon points="521,168 1091,168 1064,264 489,269" fill="#0074e8" />
      <polygon points="489,268 1064,264 1068,340 492,344" fill="#005ab2" />
      <polygon points="1091,168 1366,168 1366,236 1345,299 1143,254 1064,255" fill="#aaaaaa" />
      <polygon points="1091,168 1170,168 1144,254 1064,255" fill="#adadad" />
      <polygon points="1064,255 1144,254 1345,299 1346,337 1068,340" fill="#868686" />
      <polygon points="1366,235 1345,299 1346,337 1366,277" fill="#727272" />
      <polygon points="474,460 850,457 844,473 470,473" fill="#7b7b00" />
      <g stroke={red} strokeWidth="1.2">
        <line x1="170" y1="347.5" x2="1366" y2="336.5" />
        <line x1="170" y1="326.5" x2="213" y2="325.500" />
        <line x1="1350" y1="315.5" x2="1366" y2="315.5" />
        <line x1="170" y1="409.5" x2="1366" y2="398.5" />
        <line x1="215" y1="347" x2="176" y2="473" />
        <line x1="493" y1="344" x2="455" y2="473" />
        <line x1="869" y1="341" x2="833" y2="457" />
        <line x1="1068" y1="339" x2="1025" y2="473" />
        <line x1="1366" y1="278" x2="1302" y2="473" />
      </g>
      <g fill="none" stroke="#fff" strokeOpacity="0.55">
        <circle cx="767.5" cy="320.5" r="135.5" />
        <circle cx="767.5" cy="185" r="8.5" />
        <circle cx="767.5" cy="456" r="8.5" />
        <circle cx="632" cy="320.5" r="8.5" />
        <circle cx="903" cy="320.5" r="8.5" />
      </g>
      <circle cx="183" cy="409" r="13" fill="none" stroke="#0a8a0a" strokeDasharray="5 2" />
      <text x="183" y="415" fill="#d0d0d0" fontSize="17" fontWeight="700" textAnchor="middle" fontFamily="Liberation Mono">C</text>
      <path d="M225 423L223 388" stroke="#007bff" strokeWidth="4" />
      <polygon points="222,376 218,389 227,389" fill="#007bff" />
      <path d="M226 423H264" stroke={red} strokeWidth="4" />
      <polygon points="274,422 262,418 262,427" fill={red} />
      <path d="M227 423V411M229 406H232" stroke="#00f000" strokeWidth="2" />
      <polygon points="228,409 225,414 231,413" fill="#00f000" />
      <g fontSize="13" fontFamily="DejaVu Sans" fontWeight="200">
        <text x="208" y="381" fill="#007bff">Z</text>
        <text x="239" y="413" fill="#00f000" fontSize="12">Y</text>
        <text x="263" y="421" fill={red} fontSize="13">X</text>
      </g>
    </svg>
  )
}

function Spin({ label, value, className }) {
  return (
    <span className={clsx('flex h-6 shrink-0 items-center border border-[#777] bg-[#f8f8f8] text-[#7a7a7a]', className)}>
      <input aria-label={label} defaultValue={value} className="min-w-0 flex-1 bg-transparent pr-1.5 text-right outline-none" />
      <span className="flex h-full w-[13px] flex-col items-center justify-between py-1">
        <Caret className="rotate-180" />
        <Caret />
      </span>
    </span>
  )
}

function SnapRow() {
  return (
    <div className="flex h-[34px] shrink-0 items-center gap-0.5 pb-1">
      <Bar className="h-[29px] w-[211px] shrink-0">
        <Grip />
        <Tools
          items={[
            { icon: 'ortho', label: '正交' },
            { icon: 'snap', label: '对象捕捉', active: true },
            { icon: 'dynInput', label: '动态输入' },
          ]}
        />
      </Bar>
      <Bar className="h-[29px] w-[262px] shrink-0">
        <Grip />
        <Tools items={snapTools} />
      </Bar>
      <Bar className="h-[29px] w-[410px] shrink-0 text-[#7a7a7a]">
        <Grip />
        <span className="text-black"><Combo label="偏移方式" value="不偏移" className="w-[57px]" /></span>
        <Sep />
        <span className="mx-0.5">X=</span>
        <Spin label="X 偏移" value="0" className="w-[58px]" />
        <span className="mx-0.5">mm</span>
        <span className="mx-0.5 pl-0.5">Y=</span>
        <Spin label="Y 偏移" value="0" className="w-[58px]" />
        <span className="mx-0.5">mm</span>
        <Sep />
        <label className="mr-1 ml-0.5 flex items-center gap-2 text-black">
          <input type="checkbox" className="h-[11px] w-[11px] appearance-none border border-[#999] bg-[#f8f8f8]" />
          旋转
        </label>
        <Spin label="旋转角度" value="0.000" className="w-[68px]" />
        <span className="ml-0.5">°</span>
      </Bar>
    </div>
  )
}

function RebarPanel() {
  return (
    <section className="flex min-h-0 flex-1">
      <div className="flex w-3 shrink-0 flex-col">
        <button type="button" aria-label="关闭面板" className="mb-1 flex h-2.5 w-2.5 items-center justify-center border border-[#333] bg-white">
          <svg viewBox="0 0 8 8" className="h-2 w-2"><path d="M0 1.500H8" stroke="#b55" strokeWidth="1.500" /><path d="M1 1L7 7M7 1L1 7" stroke="#222" /></svg>
        </button>
        <div className="mx-0.5 flex-1 bg-[radial-gradient(#b9b9b9_1px,transparent_1.500px)] bg-[size:4px_5px]" />
      </div>
      <div className="mb-0.5 flex min-w-0 flex-1 flex-col">
        <Bar className="h-[26px] shrink-0">
          {['first', 'prev', 'next', 'last'].map((n) => (
            <button key={n} type="button" disabled aria-label={n} className="flex w-6 justify-center"><Icon name={n} /></button>
          ))}
          <Sep />
          {['up', 'down'].map((n) => (
            <button key={n} type="button" disabled aria-label={n} className="flex w-[22px] justify-center"><Icon name={n} /></button>
          ))}
          <Tools items={barTools} />
          <span className="ml-1"><Tool label="关闭" /></span>
          <Sep />
          <span className="ml-1.5">单构件钢筋总重(kg)：0</span>
        </Bar>
        <div className="flex min-h-0 flex-1 flex-col border border-[#a0a0a0] bg-white p-px font-['Liberation_Serif','Noto_Sans_CJK_SC',serif]">
          <div className="min-h-0 flex-1 overflow-hidden">
            <table className="w-full table-fixed border-collapse [&_td]:border-r [&_td]:border-b [&_td]:border-[#bdbdbd] [&_th]:border-r [&_th]:border-b [&_th]:border-[#bdbdbd]">
              <thead>
                <tr className="h-[19px] bg-linear-to-b from-white to-[#efefef] leading-4 whitespace-nowrap">
                  <th className="w-8" aria-label="行号" />
                  <th className="w-[73px] bg-linear-to-b from-[#f8dca0] to-[#f3bf5e] font-normal text-[#5a0050]">筋号</th>
                  {columns.map(([label, width], i) => (
                    <th key={i} className={clsx('font-normal', width)}>{label}</th>
                  ))}
                </tr>
              </thead>
              <tbody>
                <tr className="h-[19px] leading-4">
                  <td className="bg-[#ffd48c] text-center text-[#5a0050]">1*</td>
                  <td className="border-r-black! bg-[#daeaf8]" />
                  {columns.map((_, i) => <td key={i} />)}
                </tr>
              </tbody>
            </table>
          </div>
          <div className="flex h-[15px] shrink-0 bg-[#f0f0f0]">
            <ScrollArrow label="向左" d="M6 1L3 4L6 7" />
            <div className="ml-0.5 h-[15px] w-[70%] bg-[#cdcdcd]" />
            <span className="flex-1" />
            <ScrollArrow label="向右" d="M2 1L5 4L2 7" />
          </div>
        </div>
      </div>
    </section>
  )
}

function StatusBar() {
  const cell = 'flex h-5 shrink-0 items-center overflow-hidden border border-[#d5d5d5] bg-linear-to-b from-[#fbfbfb] to-[#f1f1f1] pl-px whitespace-nowrap'
  return (
    <footer className="flex h-[21px] shrink-0 items-end gap-0.5 font-['Liberation_Serif','Noto_Sans_CJK_SC',serif]">
      <div className={clsx(cell, 'w-[148px]')}>X=411982 Y=17219</div>
      <div className={clsx(cell, 'w-[78px]')}>层高:2.15m</div>
      <div className={clsx(cell, 'w-[98px]')}>底标高:-2.2m</div>
      <div className={clsx(cell, 'w-12')}>1(4)</div>
      <div className={clsx(cell, 'flex-1')} />
      <div className={clsx(cell, 'w-[70px]')}>289.1 FPS</div>
    </footer>
  )
}

const apps = [
  { name: '任务视图', width: 'w-12', art: <path d="M4 6H15V18H4ZM4 3V6M15 3V6M4 18V21M15 18V21M19 3V7M19 11V21M18 9H21" stroke="#fff" fill="none" strokeWidth="1.500" /> },
  { name: '应用中心', width: 'w-[52px]', art: <g fill="#e4e6e8"><path d="M11.500 11.500C4 13 1 11 1 6C1 0 12 -1 12 5Z" /><path d="M12.500 11.500C11 4 13 1 18 1C24 1 25 12 19 12Z" /><path d="M12.500 12.500C20 11 23 13 23 18C23 24 12 25 12 19Z" /><path d="M11.500 12.500C13 20 11 23 6 23C0 23 -1 12 5 12Z" /></g> },
  { name: '浏览器', width: 'w-[52px]', art: <><path d="M20 16C16 22 5 21 6 12C7 4 19 4 19 12H7" stroke="#e4e6e8" strokeWidth="4" fill="none" /><path d="M3 22C-1 18 14 2 20 2C22 2 22 4 21 7" stroke="#e4e6e8" strokeWidth="1.500" fill="none" /></> },
  { name: '提醒', width: 'w-[52px]', art: <><path d="M17 18C9 25 1 19 2 12C3 5 13 3 16 9C18 15 12 18 8 15C5 11 9 8 12 11M5 6C11 1 20 6 19 14" stroke="#d5d8da" strokeWidth="1.500" fill="none" /><path d="M15 8C18 5 16 -3 21 -4C26 -3 24 5 27 8Z" fill="#e0a410" /><circle cx="21" cy="9" r="1.500" fill="#e0a410" /></> },
  { name: 'Edge', width: 'w-10', art: <path d="M2 11C4 0 22 -1 22 13H8C9 19 17 19 21 17V21C13 25 4 21 4 14C4 10 8 7 11 6C8 7 8 9 8 10H15C15 5 6 4 2 11Z" fill="#0a78dc" /> },
  { name: 'IE', width: 'w-[39px]', art: <><path d="M20 16C17 22 6 21 7 12C8 4 20 4 20 12H8" stroke="#46a8ee" strokeWidth="5" fill="none" /><path d="M3 22C-1 17 14 1 21 1C23 2 23 4 22 7" stroke="#f5cf3a" strokeWidth="2" fill="none" /></> },
  { name: '文件资源管理器', width: 'w-10', on: true, art: <><path d="M1 4H9L11 6H23V21H1Z" fill="#fbd978" /><path d="M1 8H23V21H1Z" fill="#ffe9a2" /><path d="M6 21V13H19V21H15V17H10V21Z" fill="#34a4e4" /></> },
  { name: '360浏览器', width: 'w-10', on: true, art: <><circle cx="12" cy="12" r="11" fill="#f2f8ee" /><circle cx="12" cy="12" r="9.500" fill="#4db52c" /><path d="M17 15C14 19 7 18 8 12C9 7 17 7 17 12H8" stroke="#fff" strokeWidth="2.500" fill="none" /><path d="M4 22C2 14 12 3 21 1" stroke="#4db52c" strokeWidth="1.500" fill="none" /></> },
  { name: '邮件', width: 'w-10', art: <><path d="M0 9L12 3L24 9V21H0Z" fill="#fff" /><path d="M1 9H23L11 14L15 18Z" fill="#04151a" /></> },
  { name: 'GGJ', width: 'w-10', on: true, logo: true },
  { name: '广联达G+', width: 'w-[39px]', on: true, art: <path d="M22 1C12 -3 0 5 1 14C2 25 19 26 22 16C23 11 20 8 16 9C19 11 18 17 13 18C8 18 6 13 8 10C11 5 17 8 23 4C21 4 20 3 22 1Z" fill="#1c9bea" /> },
  { name: '记事', width: 'w-10', on: true, art: <><rect x="1" y="1" width="22" height="22" rx="2" fill="#f0941c" /><rect x="2" y="2" width="20" height="9" fill="#fbc04a" /><path d="M3 6L15 4L19 19L7 21Z" fill="#fff6d8" /><path d="M7 9L14 8M8 12L14 11M9 15L13 14" stroke="#a3753a" /><path d="M22 1L13 14L12 18L16 15L24 3Z" fill="#7d2e14" /></> },
]

const tray = [
  { name: '显示隐藏图标', art: <path d="M2 11L8 5L14 11" /> },
  { name: '龙', art: <><rect width="16" height="16" fill="#6f1c0c" stroke="none" /><path d="M1 4C5 1 8 6 14 3M2 9C6 5 10 9 15 6M2 14C5 9 9 14 14 9" stroke="#e0702a" strokeWidth="1.800" /></> },
  { name: '通知', art: <path d="M3 11C4 9 3 2.500 8 2.500C13 2.500 12 9 13 11L14 12.500H2ZM7 14.500H9" fill="#fff" /> },
  { name: '电源', art: <path d="M1 3V6H5V3M3 6V9H6M7 5.500H15V12.500H5V10" /> },
  { name: '网络', art: <path d="M2 15C2 8 7 3 14 3M5 15C5 10 9 6 14 6M8 15C8 12 10 9 14 9M11 15C11 13 12 12 14 12" /> },
  { name: '音量', art: <path d="M1 6H4L7 3V13L4 10H1ZM9.500 6C11 7 11 9 9.500 10M11.500 4C14 6 14 10 11.500 12M13.500 2.500C17 5 17 11 13.500 13.500" /> },
]

function Taskbar() {
  return (
    <div className="flex h-10 shrink-0 items-stretch bg-[#04151a] text-white">
      <button type="button" aria-label="开始" className="flex w-12 shrink-0 items-center justify-center bg-black">
        <svg viewBox="0 0 16 16" className="h-4 w-4"><path d="M0 2L6.500 1.200V7.500H0ZM7.500 1L16 0V7.500H7.500ZM0 8.500H6.500V15L0 14ZM7.500 8.500H16V16L7.500 15Z" fill="#fff" /></svg>
      </button>
      <label className="flex w-[344px] shrink-0 items-center bg-[#f1f1f1] pr-3 pl-2">
        <svg viewBox="0 0 24 24" className="h-6 w-6"><circle cx="12" cy="12" r="9" fill="none" stroke="#111" strokeWidth="3" /></svg>
        <input aria-label="搜索" placeholder="在这里输入你要搜索的内容" className="ml-2 flex-1 bg-transparent text-[14px] outline-none placeholder:text-[#444]" />
        <svg viewBox="0 0 16 18" className="h-[18px] w-4"><path d="M5.500 1.500H10.500V11.500H5.500ZM3 9V13.500H13V9M8 14V17M5 17H11" fill="none" stroke="#333" strokeWidth="1.200" /></svg>
      </label>
      {apps.map((app) => (
        <button key={app.name} type="button" aria-label={app.name} className={clsx('flex shrink-0 flex-col items-center justify-between', app.width)}>
          <span className="flex flex-1 items-center">
            {app.logo ? <AppLogo className="h-6 w-6" /> : <svg viewBox="0 0 24 24" className="h-[22px] w-[22px] overflow-visible">{app.art}</svg>}
          </span>
          {app.on && <span className="-mt-0.5 h-0.5 w-[31px] bg-[#76b9f5]" />}
        </button>
      ))}
      <div className="ml-auto flex shrink-0 items-center">
        <span>链接</span>
        <svg viewBox="0 0 18 18" className="mr-5 ml-6 h-4 w-4"><g fill="none" stroke="#fff" strokeWidth="1.300"><circle cx="6" cy="9" r="2.800" /><circle cx="12" cy="4" r="2.800" /><path d="M1 17C1 11 11 11 11 17M10 8C13 6 17 8 17 12" /></g></svg>
        <div className="flex items-center gap-2">
          {tray.map((t) => (
            <button key={t.name} type="button" aria-label={t.name}>
              <svg viewBox="0 0 16 16" className="h-4 w-4" fill="none" stroke="#fff" strokeWidth="1.200">{t.art}</svg>
            </button>
          ))}
        </div>
        <svg viewBox="0 0 23 13" className="ml-2 h-[13px] w-[23px]" fill="none" stroke="#fff"><rect x="0.500" y="0.500" width="22" height="12" /><path d="M3 3.500H20M3 6.500H20" strokeDasharray="1.500 1" /><path d="M6 9.500H17" /></svg>
        <span className="mr-3.5 ml-2.5 text-[13px]">中</span>
        <svg viewBox="0 0 16 16" className="h-4 w-4"><path d="M0 2L14 0L16 14L2 16Z" fill="#f04a16" /><path d="M12 4H6C4 4 4 7.500 6 7.500H10C12 8 12 12 9 12H4" stroke="#fff" strokeWidth="2.200" fill="none" /></svg>
        <time className="ml-3 w-[70px] text-center leading-[19px]">
          16:48<br />2018/9/20
        </time>
        <button type="button" aria-label="操作中心" className="mr-3 ml-3">
          <svg viewBox="0 0 26 26" className="h-[26px] w-[26px]">
            <path d="M1 2H17V14H9L5 18V14H1Z" fill="#fff" />
            <path d="M4 5.500H14M4 8H14M4 10.500H11" stroke="#04151a" />
            <circle cx="17" cy="17" r="8" fill="#2d3437" stroke="#777" />
            <text x="17" y="21" fill="#fff" fontSize="11" fontWeight="700" textAnchor="middle">2</text>
          </svg>
        </button>
        <span className="mr-1 h-10 w-px bg-[#59656a]" />
      </div>
    </div>
  )
}

export default function App() {
  return (
    <div className="flex h-screen flex-col overflow-hidden bg-[#f0f0f0] font-['Noto_Sans','Noto_Sans_CJK_SC',sans-serif] text-[12px] leading-4 text-black">
      <TitleBar />
      <MenuRow />
      <div className="flex h-8 shrink-0 items-start gap-[3px] pt-0.5">
        <Bar className="h-7 w-[148px] shrink-0">
          <Tool icon="newFile" />
          <Tool icon="open" arrow />
          <Tool icon="save" />
          <Sep />
          <span className="w-1" />
          <Tool icon="undo" arrow />
          <More />
        </Bar>
        <Bar className="h-7 w-[550px] shrink-0 pl-0.5">
          <Tools items={mainTools} />
          <More />
        </Bar>
        <Bar className="h-7 min-w-0 flex-1">
          <Tools items={viewTools} />
          <More />
        </Bar>
      </div>

      <main className="flex min-h-0 flex-1">
        <Sidebar />
        <div className="ml-[5px] flex min-w-0 flex-1 flex-col">
          <div className="flex h-7 shrink-0 items-start">
            <Bar className="h-[26px] w-[791px]">
              <Grip />
              <Tools items={editTools} />
            </Bar>
          </div>
          <div className="flex h-7 shrink-0 items-start">
            <Bar className="h-[26px] w-[567px] shrink-0">
              <Grip />
              <Combo label="楼层" value="基础层" className="w-[58px]" />
              <Combo label="构件类别" value="基础" className="w-[70px]" />
              <Combo label="构件类型" value="筏板基础" className="w-[70px]" />
              <Combo label="构件" value="FB-3" className="w-[70px]" />
              <Tools items={elementTools} />
            </Bar>
            <Bar className="ml-[74px] h-[26px] w-[423px] shrink-0">
              <Grip />
              <Tools items={axisTools} />
            </Bar>
          </div>
          <div className="flex h-7 shrink-0 items-start gap-1">
            <Bar className="h-[26px] min-w-0 flex-1">
              <Grip />
              <Tools items={drawTools} />
              <Combo label="绘制方式" value="" className="w-14" />
              <Tools items={slabTools} />
              <More />
            </Bar>
            <Bar className="h-[26px] w-8 shrink-0">
              <Grip />
            </Bar>
          </div>
          <Viewport />
          <SnapRow />
          <RebarPanel />
        </div>
      </main>

      <StatusBar />
      <Taskbar />
    </div>
  )
}
